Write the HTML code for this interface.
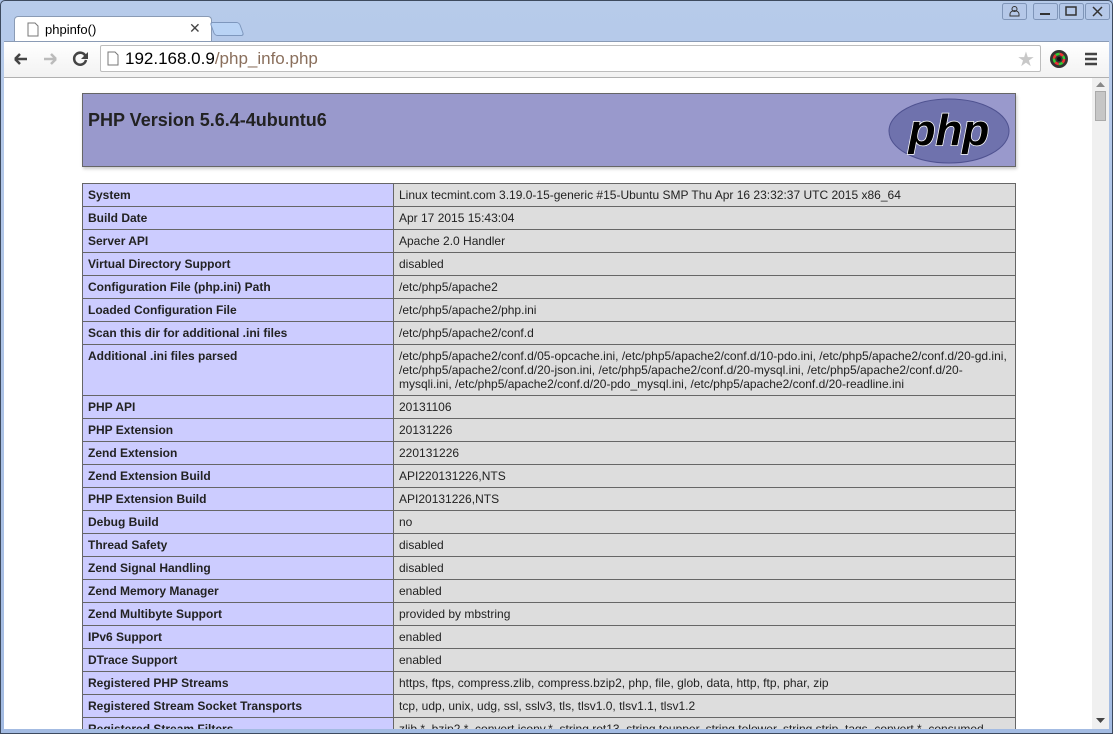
<!DOCTYPE html>
<html><head><meta charset="utf-8"><style>
*{box-sizing:border-box;margin:0;padding:0}
body{width:1113px;height:734px;overflow:hidden;background:#a9c0e4;font-family:"Liberation Sans",sans-serif;position:relative}
.frame{position:absolute;left:0;top:0;width:1113px;height:734px;border:1px solid #3d4a5e;border-radius:5px 5px 0 0;background:linear-gradient(#b7cbea,#a3bbe2)}
.tab{position:absolute;left:14px;top:16px;width:198px;height:27px;background:#fff;border:1px solid #8a9bb5;border-bottom:none;border-radius:4px 4px 0 0}
.tab span{position:absolute;left:30px;top:5px;font-size:13px;color:#000}
.tab .x{position:absolute;left:174px;top:3px;font-size:14px;color:#444}
.newtab{position:absolute;left:212px;top:22px;width:30px;height:14px;background:#b9d3f5;border:1px solid #7e97bd;border-radius:3px;transform:skewX(20deg)}
.toolbar{position:absolute;left:4px;top:41px;width:1105px;height:37px;background:linear-gradient(#fff,#f2f2f2);border-bottom:1px solid #b0b0b0;border-top:1px solid #8a9bb5}
.url{position:absolute;left:100px;top:45px;width:941px;height:27px;background:#fff;border:1px solid #bdbdbd;border-radius:2px}
.url span{position:absolute;left:24px;top:3px;font-size:17px;color:#000}
.url span i{font-style:normal;color:#8a6f5c}
.view{position:absolute;left:4px;top:78px;width:1105px;height:651px;background:#fff;overflow:hidden}
.sb{position:absolute;right:0;top:0;width:17px;height:651px;background:#f0f0f0}
.thumb{position:absolute;left:3px;top:13px;width:11px;height:30px;background:#c6c6c6;border:1px solid #aaa}
.hdr{position:absolute;left:78px;top:15px;width:934px;height:74px;background:#9999cc;border:1px solid #666;box-shadow:1px 2px 3px #ccc}
.hdr h1{position:absolute;left:5px;top:16px;font-size:18px;font-weight:bold;color:#222}
table{position:absolute;left:78px;top:105px;width:934px;border-collapse:collapse;font-size:12px;color:#222}
td{border:1px solid #666;padding:0 5px;height:23px;vertical-align:middle;line-height:14px}
td.e{background:#ccccff;font-weight:bold;width:311px}
td.v{background:#dddddd}
tr.tall td{vertical-align:top;padding-top:4px;height:51px}
</style></head><body>
<div class="frame"></div>
<div class="tab"><svg style="position:absolute;left:12px;top:5px" width="12" height="15"><path d="M1 1h7l3 3v10H1z" fill="#fff" stroke="#777"/></svg><span>phpinfo()</span><span class="x">✕</span></div>
<div class="newtab"></div>
<svg style="position:absolute;left:1002px;top:3px" width="108" height="18"><rect x="0.5" y="0.5" width="24" height="16" rx="2" fill="#b5c8e8" stroke="#7f95b8"/><circle cx="12.5" cy="6" r="2.5" fill="none" stroke="#333"/><path d="M8 13h9v-2a4 3 0 0 0-9 0z" fill="none" stroke="#333"/><rect x="31.5" y="0.5" width="24" height="16" rx="2" fill="#b5c8e8" stroke="#7f95b8"/><path d="M38 11h10" stroke="#333" stroke-width="2"/><rect x="57.5" y="0.5" width="24" height="16" rx="2" fill="#b5c8e8" stroke="#7f95b8"/><rect x="64" y="4" width="10" height="8" fill="none" stroke="#333" stroke-width="1.5"/><rect x="83.5" y="0.5" width="24" height="16" rx="2" fill="#b5c8e8" stroke="#7f95b8"/><path d="M91 4l9 9M100 4l-9 9" stroke="#333" stroke-width="1.5"/></svg>
<div class="toolbar"></div>
<svg style="position:absolute;left:12px;top:50px" width="80" height="18"><path d="M3 9h12M3 9l5-5M3 9l5 5" stroke="#444" stroke-width="2.5" fill="none"/><path d="M32 9h12M44 9l-5-5M44 9l-5 5" stroke="#bbb" stroke-width="2.5" fill="none"/><path d="M73.5 6a6 6 0 1 0 0.5 4" stroke="#444" stroke-width="2.5" fill="none"/><path d="M76 2v7h-7z" fill="#444"/></svg>
<div class="url"><svg style="position:absolute;left:6px;top:5px" width="12" height="15"><path d="M1 1h7l3 3v10H1z" fill="#fff" stroke="#777"/></svg><span>192.168.0.9<i>/php_info.php</i></span><span style="left:916px;top:1px;font-size:20px;color:#c8c8c8">★</span></div>
<svg style="position:absolute;left:1049px;top:49px" width="20" height="20"><circle cx="10" cy="10" r="9" fill="#333"/><circle cx="10" cy="10" r="5" fill="none" stroke="#e33" stroke-width="2.5" stroke-dasharray="4 4"/><circle cx="10" cy="10" r="5" fill="none" stroke="#3c3" stroke-width="2.5" stroke-dasharray="4 4" stroke-dashoffset="4"/><circle cx="10" cy="10" r="2" fill="#111"/></svg>
<svg style="position:absolute;left:1084px;top:52px" width="14" height="14"><path d="M1 2h12M1 7h12M1 12h12" stroke="#444" stroke-width="2.5"/></svg>
<div class="view">
<div class="hdr"><h1>PHP Version 5.6.4-4ubuntu6</h1>
<svg style="position:absolute;left:805px;top:4px" width="122" height="66"><ellipse cx="61" cy="33" rx="60" ry="32" fill="#6f72ad" stroke="#4f5290"/><text x="61" y="47" text-anchor="middle" font-family="Liberation Sans" font-weight="bold" font-style="italic" font-size="44" fill="#000" stroke="#fff" stroke-width="1.5" paint-order="stroke">php</text></svg></div>
<table>
<tr><td class="e">System</td><td class="v">Linux tecmint.com 3.19.0-15-generic #15-Ubuntu SMP Thu Apr 16 23:32:37 UTC 2015 x86_64</td></tr>
<tr><td class="e">Build Date</td><td class="v">Apr 17 2015 15:43:04</td></tr>
<tr><td class="e">Server API</td><td class="v">Apache 2.0 Handler</td></tr>
<tr><td class="e">Virtual Directory Support</td><td class="v">disabled</td></tr>
<tr><td class="e">Configuration File (php.ini) Path</td><td class="v">/etc/php5/apache2</td></tr>
<tr><td class="e">Loaded Configuration File</td><td class="v">/etc/php5/apache2/php.ini</td></tr>
<tr><td class="e">Scan this dir for additional .ini files</td><td class="v">/etc/php5/apache2/conf.d</td></tr>
<tr class="tall"><td class="e">Additional .ini files parsed</td><td class="v">/etc/php5/apache2/conf.d/05-opcache.ini, /etc/php5/apache2/conf.d/10-pdo.ini, /etc/php5/apache2/conf.d/20-gd.ini, /etc/php5/apache2/conf.d/20-json.ini, /etc/php5/apache2/conf.d/20-mysql.ini, /etc/php5/apache2/conf.d/20-mysqli.ini, /etc/php5/apache2/conf.d/20-pdo_mysql.ini, /etc/php5/apache2/conf.d/20-readline.ini</td></tr>
<tr><td class="e">PHP API</td><td class="v">20131106</td></tr>
<tr><td class="e">PHP Extension</td><td class="v">20131226</td></tr>
<tr><td class="e">Zend Extension</td><td class="v">220131226</td></tr>
<tr><td class="e">Zend Extension Build</td><td class="v">API220131226,NTS</td></tr>
<tr><td class="e">PHP Extension Build</td><td class="v">API20131226,NTS</td></tr>
<tr><td class="e">Debug Build</td><td class="v">no</td></tr>
<tr><td class="e">Thread Safety</td><td class="v">disabled</td></tr>
<tr><td class="e">Zend Signal Handling</td><td class="v">disabled</td></tr>
<tr><td class="e">Zend Memory Manager</td><td class="v">enabled</td></tr>
<tr><td class="e">Zend Multibyte Support</td><td class="v">provided by mbstring</td></tr>
<tr><td class="e">IPv6 Support</td><td class="v">enabled</td></tr>
<tr><td class="e">DTrace Support</td><td class="v">enabled</td></tr>
<tr><td class="e">Registered PHP Streams</td><td class="v">https, ftps, compress.zlib, compress.bzip2, php, file, glob, data, http, ftp, phar, zip</td></tr>
<tr><td class="e">Registered Stream Socket Transports</td><td class="v">tcp, udp, unix, udg, ssl, sslv3, tls, tlsv1.0, tlsv1.1, tlsv1.2</td></tr>
<tr><td class="e">Registered Stream Filters</td><td class="v">zlib.*, bzip2.*, convert.iconv.*, string.rot13, string.toupper, string.tolower, string.strip_tags, convert.*, consumed</td></tr>
</table>
<div class="sb"><svg style="position:absolute;left:4px;top:4px" width="9" height="6"><path d="M0 5h9L4.5 0z" fill="#888"/></svg><div class="thumb"></div><svg style="position:absolute;left:4px;top:640px" width="9" height="6"><path d="M0 0h9L4.5 5z" fill="#444"/></svg></div>
</div>
</body></html>
